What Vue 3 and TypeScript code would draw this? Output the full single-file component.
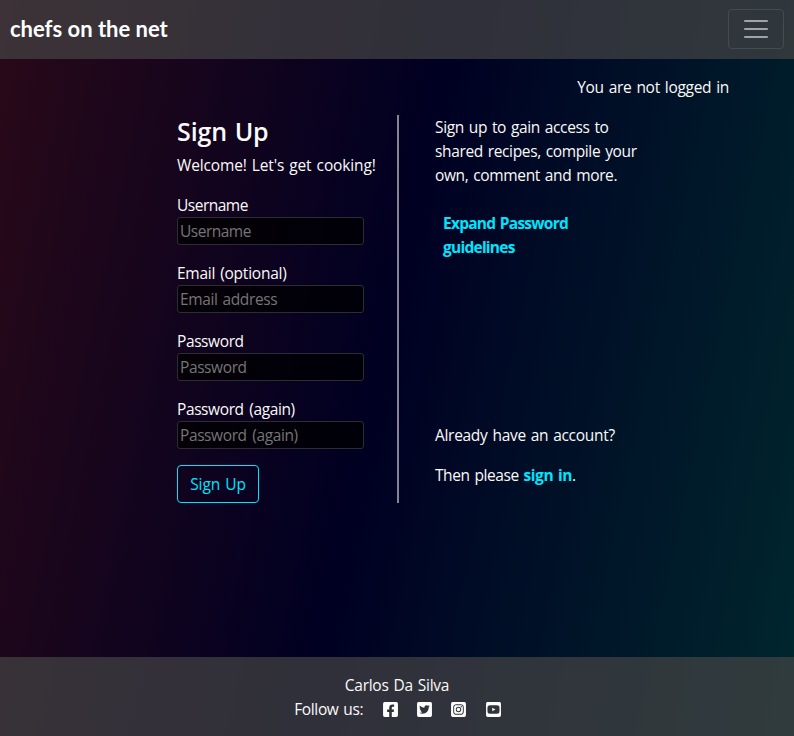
<script setup lang="ts">
interface Field {
  id: string
  label: string
  placeholder: string
  type: string
  cls: string
}

const fields: Field[] = [
  { id: 'username', label: 'Username', placeholder: 'Username', type: 'text', cls: 'f-user' },
  { id: 'email', label: 'Email (optional)', placeholder: 'Email address', type: 'email', cls: 'f-email' },
  { id: 'password1', label: 'Password', placeholder: 'Password', type: 'password', cls: 'f-pass' },
  { id: 'password2', label: 'Password (again)', placeholder: 'Password (again)', type: 'password', cls: 'f-again' },
]

const socials = [
  {
    name: 'Facebook',
    path: 'M400 32H48A48 48 0 0 0 0 80v352a48 48 0 0 0 48 48h137.250V327.690h-63V256h63v-54.640c0-62.150 37-96.480 93.670-96.480 27.140 0 55.520 4.840 55.520 4.840v61h-31.270c-30.810 0-40.420 19.120-40.420 38.730V256h68.780l-11 71.690h-57.780V480H400a48 48 0 0 0 48-48V80a48 48 0 0 0-48-48z',
  },
  {
    name: 'Twitter',
    path: 'M400 32H48C21.500 32 0 53.500 0 80v352c0 26.500 21.500 48 48 48h352c26.500 0 48-21.500 48-48V80c0-26.500-21.500-48-48-48zm-48.900 158.800c.2 2.800.2 5.700.2 8.500 0 86.700-66 186.600-186.600 186.600-37.200 0-71.700-10.800-100.700-29.400 5.300.6 10.400.8 15.800.8 30.700 0 58.900-10.400 81.400-28-28.800-.6-53-19.500-61.300-45.500 10.100 1.500 19.200 1.500 29.600-1.200-30-6.100-52.500-32.500-52.500-64.400v-.8c8.700 4.900 18.900 7.900 29.600 8.300a65.447 65.447 0 0 1-29.200-54.600c0-12.200 3.200-23.400 8.900-33.100 32.300 39.800 80.800 65.800 135.200 68.600-9.300-44.500 24-80.600 64-80.600 18.900 0 35.900 7.900 47.900 20.700 14.800-2.800 29-8.300 41.600-15.800-4.900 15.200-15.200 28-28.800 36.100 13.200-1.400 26-5.100 37.800-10.200-8.900 13.100-20.100 24.700-32.900 34z',
  },
  {
    name: 'Instagram',
    path: 'M224 202.660A53.340 53.340 0 1 0 277.360 256 53.380 53.380 0 0 0 224 202.660Zm124.710-41a54 54 0 0 0-30.410-30.410c-21-8.290-71-6.430-94.300-6.430s-73.250-1.930-94.310 6.430a54 54 0 0 0-30.410 30.410c-8.280 21-6.430 71.050-6.430 94.330S91 329.260 99.320 350.330a54 54 0 0 0 30.410 30.410c21 8.290 71 6.430 94.310 6.430s73.240 1.930 94.300-6.430a54 54 0 0 0 30.410-30.410c8.350-21 6.430-71.050 6.430-94.330S357.100 182.740 348.750 161.670ZM224 338a82 82 0 1 1 82-82 81.900 81.900 0 0 1-82 82Zm85.380-148.300a19.140 19.140 0 1 1 19.130-19.140 19.100 19.100 0 0 1-19.130 19.140ZM400 32H48A48 48 0 0 0 0 80V432a48 48 0 0 0 48 48H400a48 48 0 0 0 48-48V80A48 48 0 0 0 400 32ZM382.880 322c-1.290 25.630-7.140 48.340-25.850 67s-41.400 24.630-67 25.850c-26.410 1.490-105.590 1.490-132 0-25.630-1.290-48.260-7.150-67-25.850s-24.630-41.420-25.850-67c-1.500-26.420-1.500-105.610 0-132 1.290-25.630 7.070-48.340 25.850-67s41.470-24.560 67-25.780c26.410-1.490 105.590-1.490 132 0 25.630 1.290 48.330 7.150 67 25.850s24.630 41.420 25.850 67.050C384.370 216.440 384.370 295.560 382.880 322Z',
  },
  {
    name: 'YouTube',
    path: 'M186.800 202.100l95.200 54.100-95.200 54.100V202.100zM448 80v352c0 26.500-21.500 48-48 48H48c-26.500 0-48-21.500-48-48V80c0-26.500 21.500-48 48-48h352c26.500 0 48 21.500 48 48zm-42 176.300s0-59.600-7.600-88.200c-4.200-15.800-16.500-28.200-32.200-32.400C337.900 128 224 128 224 128s-113.900 0-142.200 7.700c-15.700 4.200-28 16.600-32.200 32.400-7.600 28.500-7.600 88.200-7.600 88.200s0 59.600 7.600 88.200c4.200 15.800 16.500 27.700 32.200 31.900C110.100 384 224 384 224 384s113.900 0 142.200-7.700c15.700-4.200 28-16.100 32.200-31.900 7.600-28.500 7.600-88.100 7.600-88.100z',
  },
]
</script>

<template>
  <div class="page">
    <header class="navbar">
      <a class="brand">chefs on the net</a>
      <button class="toggler" type="button" aria-label="Menu">
        <svg width="30" height="30" viewBox="0 0 30 30">
          <path d="M4 7h22M4 15h22M4 23h22" stroke="currentColor" stroke-width="2" stroke-linecap="round" />
        </svg>
      </button>
    </header>
    <div class="status"><span>You are not logged in</span></div>
    <main class="content">
      <form class="signup" @submit.prevent>
        <h1>Sign Up</h1>
        <p class="welcome">Welcome! Let's get cooking!</p>
        <div v-for="f in fields" :key="f.id" class="field" :class="f.cls">
          <label :for="f.id">{{ f.label }}</label>
          <input :id="f.id" :type="f.type" :placeholder="f.placeholder" />
        </div>
        <button class="submit" type="submit">Sign Up</button>
      </form>
      <section class="aside">
        <p class="intro">Sign up to gain access to<br />shared recipes, compile your<br />own, comment and more.</p>
        <a class="expand">Expand Password<br />guidelines</a>
        <div class="existing">
          <p>Already have an account?</p>
          <p class="then">Then please <a>sign in</a>.</p>
        </div>
      </section>
    </main>
    <footer class="footer">
      <div class="author">Carlos Da Silva</div>
      <div class="follow">
        <span>Follow us:</span>
        <a v-for="s in socials" :key="s.name" :aria-label="s.name">
          <svg width="15" height="17" viewBox="0 0 448 512"><path :d="s.path" fill="currentColor" /></svg>
        </a>
      </div>
    </footer>
  </div>
</template>

<style>
body {
  margin: 0;
}
</style>

<style scoped>
* {
  box-sizing: border-box;
}
.page {
  display: flex;
  flex-direction: column;
  height: 736px;
  overflow: hidden;
  color: #fafafa;
  font: 15.5px/24px 'Open Sans', 'Noto Sans', sans-serif;
  letter-spacing: -0.36px;
  word-spacing: 1.2px;
  background: linear-gradient(102deg, #290918 0%, #000022 48%, #00272e 100%);
}
h1,
p {
  margin: 0;
}
.navbar {
  display: flex;
  align-items: center;
  justify-content: space-between;
  height: 59px;
  padding: 0 10px;
  background: rgba(68, 68, 68, 0.7);
}
.brand {
  margin-top: -1px;
  font: 700 22px/36px Lato, sans-serif;
  letter-spacing: 0;
  word-spacing: 0;
  color: #fff;
}
.toggler {
  display: flex;
  align-items: center;
  justify-content: center;
  width: 56px;
  height: 40px;
  margin-top: -1px;
  padding: 0;
  border: 1px solid rgba(255, 255, 255, 0.1);
  border-radius: 4px;
  background: none;
  color: rgba(255, 255, 255, 0.55);
}
.status {
  display: flex;
  justify-content: flex-end;
  height: 56px;
  padding: 16px 65px 0 0;
  letter-spacing: -0.3px;
}
.content {
  display: flex;
  height: 388px;
  padding-left: 177px;
}
.signup {
  width: 222px;
  border-right: 2px solid #868493;
}
h1 {
  margin-bottom: 8px;
  font-size: 25px;
  line-height: 33px;
  height: 30px;
  font-weight: 600;
  letter-spacing: -0.1px;
}
.welcome {
  margin-bottom: 16px;
  white-space: nowrap;
  letter-spacing: -0.14px;
}
.field {
  margin-bottom: 16px;
}
.f-user {
  letter-spacing: -0.5px;
}
.f-email label {
  letter-spacing: -0.24px;
}
.f-pass,
.f-again {
  letter-spacing: -0.4px;
  word-spacing: 2px;
}
label {
  display: block;
}
input {
  display: block;
  width: 187px;
  height: 28px;
  padding: 1px 2px;
  border: 1px solid #2d2d31;
  border-radius: 3px;
  background: rgba(0, 0, 0, 0.75);
  color: #fafafa;
  font: inherit;
  letter-spacing: inherit;
  word-spacing: inherit;
}
input::placeholder {
  color: #757575;
  opacity: 1;
}
.submit {
  width: 82px;
  height: 38px;
  padding: 0;
  border: 1px solid #00e5ff;
  border-radius: 4px;
  background: none;
  color: #00e5ff;
  font: inherit;
  letter-spacing: -0.1px;
  word-spacing: inherit;
}
.aside {
  display: flex;
  flex-direction: column;
  width: 240px;
  padding-left: 36px;
  white-space: nowrap;
}
.aside a {
  color: #00e5ff;
  font-weight: 700;
}
.aside .expand {
  margin: 24px 0 0 8px;
  letter-spacing: -0.75px;
}
.existing {
  display: flex;
  flex-direction: column;
  gap: 16px;
  margin: auto 0 16px;
  letter-spacing: -0.3px;
}
.then {
  letter-spacing: -0.42px;
}
.footer {
  height: 79px;
  margin-top: auto;
  padding-top: 16px;
  text-align: center;
  background: rgba(68, 68, 68, 0.7);
}
.author {
  letter-spacing: -0.26px;
}
.follow {
  display: flex;
  justify-content: center;
  align-items: center;
  gap: 19.4px;
  padding-left: 1px;
}
.follow a {
  display: flex;
  color: #fff;
}
</style>
